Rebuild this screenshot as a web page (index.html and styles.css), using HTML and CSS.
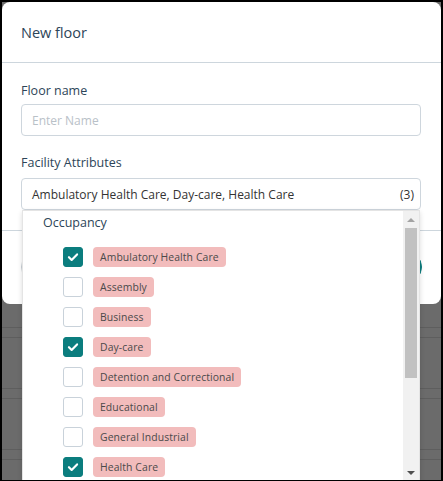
FILE: index.html
```html
<!DOCTYPE html>
<html lang="en">
<head>
<meta charset="utf-8">
<title>New floor</title>
<link rel="stylesheet" href="styles.css">
</head>
<body>
<div class="screen">
  <div class="backdrop-rows">
    <div class="bg-row"></div>
    <div class="bg-row"></div>
    <div class="bg-row"></div>
  </div>

  <div class="modal">
    <div class="modal-header">New floor</div>
    <div class="modal-body">
      <label class="field-label">Floor name</label>
      <div class="input placeholder">Enter Name</div>
      <label class="field-label second">Facility Attributes</label>
      <div class="select">
        <span class="select-text">Ambulatory Health Care, Day-care, Health Care</span>
        <span class="select-count">(3)</span>
      </div>
    </div>
    <div class="modal-footer">
      <button class="btn btn-cancel">Cancel</button>
      <button class="btn btn-save">Save</button>
    </div>
  </div>

  <div class="dropdown">
    <div class="dropdown-list">
      <div class="group-title">Occupancy</div>
      <div class="option"><span class="check on"><svg viewBox="0 0 20 20"><path d="M5.5 10.3l3 3 6-6.2" fill="none" stroke="#fff" stroke-width="2.4" stroke-linecap="round" stroke-linejoin="round"/></svg></span><span class="tag">Ambulatory Health Care</span></div>
      <div class="option"><span class="check"></span><span class="tag">Assembly</span></div>
      <div class="option"><span class="check"></span><span class="tag">Business</span></div>
      <div class="option"><span class="check on"><svg viewBox="0 0 20 20"><path d="M5.5 10.3l3 3 6-6.2" fill="none" stroke="#fff" stroke-width="2.4" stroke-linecap="round" stroke-linejoin="round"/></svg></span><span class="tag">Day-care</span></div>
      <div class="option"><span class="check"></span><span class="tag">Detention and Correctional</span></div>
      <div class="option"><span class="check"></span><span class="tag">Educational</span></div>
      <div class="option"><span class="check"></span><span class="tag">General Industrial</span></div>
      <div class="option"><span class="check on"><svg viewBox="0 0 20 20"><path d="M5.5 10.3l3 3 6-6.2" fill="none" stroke="#fff" stroke-width="2.4" stroke-linecap="round" stroke-linejoin="round"/></svg></span><span class="tag">Health Care</span></div>
    </div>
    <div class="scrollbar">
      <div class="sb-arrow up"></div>
      <div class="sb-track"><div class="sb-thumb"></div></div>
      <div class="sb-arrow down"></div>
    </div>
  </div>
</div>
</body>
</html>
```

FILE: styles.css
```css
* { box-sizing: border-box; }

html, body {
  margin: 0;
  padding: 0;
  background: #000;
}

body {
  font-family: "Open Sans", "Noto Sans", sans-serif;
  width: 443px;
  height: 481px;
  overflow: hidden;
}

.screen {
  position: relative;
  margin: 2px 2px 1px 2px;
  width: 439px;
  height: 478px;
  background: #6b6b6b;
  overflow: hidden;
}

/* table rows of the page behind the overlay */
.backdrop-rows {
  position: absolute;
  left: 0;
  right: 0;
  top: 325px;
}
.bg-row {
  height: 11px;
  border-top: 1px solid #5e5e5e;
  border-bottom: 1px solid #5e5e5e;
  margin-bottom: 50px;
}

/* dialog */
.modal {
  position: relative;
  background: #fff;
  border-radius: 8px;
  height: 302px;
}

.modal-header {
  height: 61px;
  padding: 0 19px;
  display: flex;
  align-items: center;
  font-size: 14.5px;
  color: #2d4558;
  border-bottom: 1px solid #cdd6dd;
}

.modal-body {
  padding: 19px 20px 20px 19px;
}

.field-label {
  display: block;
  font-size: 12.5px;
  line-height: 18px;
  color: #2d4558;
  margin-bottom: 4px;
}
.field-label.second {
  margin-top: 18px;
  margin-bottom: 6px;
}

.input,
.select {
  height: 32px;
  border: 1px solid #ced6dd;
  border-radius: 4px;
  display: flex;
  align-items: center;
  padding: 0 6px 0 10px;
  font-size: 12px;
}
.placeholder { color: #b9c1c8; }

.select { color: #333; justify-content: space-between; }
.select-count { color: #333; }

.modal-footer {
  border-top: 1px solid #cdd6dd;
  padding: 20px 19px;
  display: flex;
  justify-content: space-between;
}
.btn {
  height: 32px;
  border-radius: 16px;
  padding: 0 22px;
  font-family: inherit;
  font-size: 13px;
}
.btn-cancel {
  background: #fff;
  border: 1px solid #c6ced5;
  color: #2d4558;
}
.btn-save {
  background: #0b7d7e;
  border: 1px solid #0b7d7e;
  color: #fff;
}

/* multi-select dropdown menu */
.dropdown {
  position: absolute;
  left: 20px;
  top: 208px;
  width: 398px;
  height: 272px;
  background: #fff;
  border: 1px solid #e4e4e4;
  box-shadow: 0 2px 5px rgba(0, 0, 0, 0.14);
  display: flex;
}

.dropdown-list {
  flex: 1;
  padding: 3px 0 0 20px;
}

.group-title {
  font-size: 12.5px;
  line-height: 18px;
  color: #2d4558;
  margin-bottom: 10px;
}

.option {
  height: 30px;
  display: flex;
  align-items: center;
  padding-left: 20px;
}

.check {
  width: 20px;
  height: 20px;
  border: 1px solid #c9d2da;
  border-radius: 3px;
  background: #fff;
  margin-right: 10px;
  flex: none;
}
.check.on {
  background: #0b7d7e;
  border-color: #0b7d7e;
}
.check svg {
  display: block;
  width: 18px;
  height: 18px;
}

.tag {
  height: 20px;
  display: inline-flex;
  align-items: center;
  padding: 0 7px;
  border-radius: 4px;
  background: #f2bcbc;
  color: #4a4a4a;
  font-size: 10.4px;
  letter-spacing: 0.1px;
}

/* scrollbar */
.scrollbar {
  width: 16px;
  background: #f1f1f1;
  display: flex;
  flex-direction: column;
}
.sb-arrow {
  height: 17px;
  display: flex;
  align-items: center;
  justify-content: center;
}
.sb-arrow::before {
  content: "";
  border-left: 4px solid transparent;
  border-right: 4px solid transparent;
}
.sb-arrow.up::before { border-bottom: 4px solid #a3a3a3; }
.sb-arrow.down::before { border-top: 4px solid #505050; }
.sb-track {
  flex: 1;
  padding: 0 2px;
}
.sb-thumb {
  height: 150px;
  background: #c1c1c1;
}
```
